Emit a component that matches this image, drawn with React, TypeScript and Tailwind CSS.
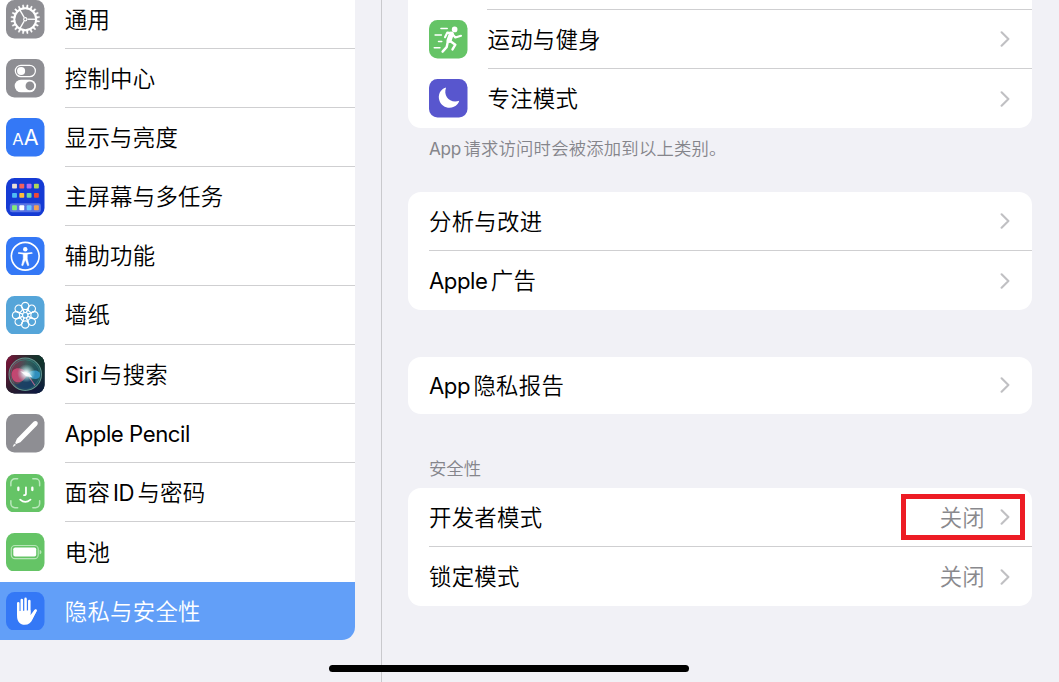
import type { ReactNode } from "react";

const range = (n: number) => Array.from({ length: n }, (_, i) => i);

function Gear() {
  return (
    <g stroke="#fff" fill="none">
      <circle cx="19" cy="19" r="10.8" strokeWidth="1.9" />
      {range(20).map((i) => (
        <path key={i} d="M18 8.6 18.4 4.7h1.2l.4 3.9z" fill="#fff" strokeWidth=".3" transform={`rotate(${i * 18 + 9} 19 19)`} />
      ))}
      {[90, 210, 330].map((a) => (
        <path key={a} d="M19 16.8V8.6" strokeWidth="1.3" transform={`rotate(${a} 19 19)`} />
      ))}
      <circle cx="19" cy="19" r="1.6" strokeWidth="1.1" />
    </g>
  );
}

function Switches() {
  return (
    <g>
      <rect x="9.2" y="6.2" width="19.8" height="11.2" rx="5.6" fill="none" stroke="#fff" strokeWidth="1.2" />
      <circle cx="14.9" cy="11.8" r="4" fill="#fff" />
      <rect x="8.6" y="20.4" width="21" height="12.4" rx="6.2" fill="#fff" />
      <circle cx="23.6" cy="26.6" r="4.3" fill="#8e8e93" />
    </g>
  );
}

function LetterSize() {
  return (
    <g fill="#fff" fontFamily="Inter, sans-serif">
      <text x="6.2" y="26.8" fontSize="16.3">A</text>
      <text x="17.6" y="26.8" fontSize="21.3">A</text>
    </g>
  );
}

const tiles = ["#e8dfd5", "#f4605c", "#b06cf0", "#b0d858", "#4fbcf5", "#fcbd3c", "#6bd7a2", "#ed4938", "#84ed78", "#fff", "#68c8fa", "#f2a053"];

function HomeGrid() {
  return (
    <g>
      <rect x="3.7" y="24.9" width="30.8" height="9" rx="2.4" fill="#5874e4" />
      {tiles.map((c, i) => (
        <rect key={i} x={6 + (i % 4) * 7.2} y={[5.6, 14.8, 27][Math.floor(i / 4)]} width="4.8" height="4.8" rx=".8" fill={c} />
      ))}
    </g>
  );
}

function Person() {
  return (
    <g>
      <circle cx="19" cy="19" r="13.7" fill="none" stroke="#fff" strokeWidth="1.6" />
      <circle cx="19" cy="12" r="2.2" fill="#fff" />
      <path d="M12.6 15.8 17.6 16.4h2.8l5-.6" stroke="#fff" strokeWidth="1.6" strokeLinecap="round" fill="none" />
      <path d="M17 16.2h4v5.3l1.6 6.4-1.2.5L19 22.5l-2.4 5.9-1.2-.5L17 21.5z" fill="#fff" stroke="#fff" strokeWidth=".5" strokeLinejoin="round" />
    </g>
  );
}

function Flower() {
  return (
    <g fill="none" stroke="#fff" strokeWidth="1.2">
      {range(8).map((i) => (
        <g key={i} transform={`rotate(${i * 45} 19 19)`}>
          <circle cx="19" cy="9.9" r="3.6" />
          <path d="M15.6 11.2 18 16.2M22.4 11.2 20 16.2" strokeWidth="1" />
        </g>
      ))}
      <circle cx="19" cy="19" r="2.7" />
    </g>
  );
}

function SiriOrb() {
  return (
    <g>
      <defs>
        <linearGradient id="siriBg" x1="0" y1="0" x2="1" y2="1">
          <stop offset="0" stopColor="#86143a" />
          <stop offset=".5" stopColor="#2b1c2d" />
          <stop offset="1" stopColor="#061745" />
        </linearGradient>
        <linearGradient id="siriGreen" x1="1" y1="0" x2=".4" y2=".5">
          <stop offset="0" stopColor="#0b3a2c" />
          <stop offset="1" stopColor="#0b3a2c" stopOpacity="0" />
        </linearGradient>
        <linearGradient id="siriBall" x1="0" y1=".4" x2="1" y2=".6">
          <stop offset="0" stopColor="#a32f52" />
          <stop offset=".5" stopColor="#3f7f78" />
          <stop offset="1" stopColor="#16617a" />
        </linearGradient>
        <radialGradient id="siriGlow">
          <stop offset="0" stopColor="#fff" />
          <stop offset=".25" stopColor="#eafcff" stopOpacity=".85" />
          <stop offset="1" stopColor="#a6eee9" stopOpacity="0" />
        </radialGradient>
      </defs>
      <rect width="38" height="38" rx="8.4" fill="url(#siriBg)" />
      <rect width="38" height="38" rx="8.4" fill="url(#siriGreen)" />
      <circle cx="19" cy="19" r="16" fill="url(#siriBall)" fillOpacity=".6" stroke="#63968f" strokeWidth="1" />
      <circle cx="19" cy="19" r="14.4" fill="none" stroke="#398d83" strokeWidth=".6" />
      <path d="M20 21Q12 33 7 27Q12 35 20 34Q27 33 29 28z" fill="#153b67" fillOpacity=".75" />
      <path d="M21 19C17 11 5.5 11 5.5 19.5S16 31 21 19z" fill="#e04c7e" fillOpacity=".75" />
      <path d="M20 19C24 24 33 26 33.5 20S25 14 20 19z" fill="#37a4dc" fillOpacity=".75" />
      <path d="M23 22 28.5 30" stroke="#ed7a9b" strokeWidth="1" strokeOpacity=".7" />
      <circle cx="20" cy="18" r="9" fill="url(#siriGlow)" />
      <path d="M14 16 23 18 26 22 20 21z" fill="#fff" fillOpacity=".8" />
    </g>
  );
}

function PencilTip() {
  return (
    <g fill="#fff">
      <path d="M27.2 7.7c1.2-1.1 2.8-.9 3.6 0s.8 2.5-.3 3.6L14.2 27.9l-4.2 1.8-1-1 1.8-4.3z" />
      <path d="M8.4 29.5 7.1 32 9.4 30.6z" stroke="#fff" strokeWidth=".6" />
    </g>
  );
}

function FaceScan() {
  return (
    <g fill="none" strokeLinecap="round">
      <path d="M4.8 11.5V8.8a4 4 0 0 1 4-4h2.7M26.5 4.8h2.7a4 4 0 0 1 4 4v2.7M33.2 26.5v2.7a4 4 0 0 1-4 4h-2.7M11.5 33.2H8.8a4 4 0 0 1-4-4v-2.7" stroke="#b9e8bb" strokeWidth="1.5" />
      <path d="M12.2 13.6v2.2M26 13.6v2.2" stroke="#fff" strokeWidth="2.3" />
      <path d="M19.7 13.2v6.2q0 1.5-1.9 1.5M14 25.3q5 4.6 10.2 0" stroke="#fff" strokeWidth="1.7" />
    </g>
  );
}

function Battery() {
  return (
    <g>
      <rect x="5.2" y="12.3" width="26.6" height="13" rx="3.6" fill="none" stroke="#b6e6b7" strokeWidth="1.1" />
      <rect x="7.2" y="14.3" width="22.6" height="9" rx="1.8" fill="#fff" />
      <path d="M33.2 16.7c2.4.6 2.4 3.6 0 4.2z" fill="#b6e6b7" />
    </g>
  );
}

function Hand() {
  return (
    <g fill="none" stroke="#fff" strokeWidth="2.5" strokeLinecap="round">
      <path d="M12.1 11v11M15.6 7.8v12M19.3 6.8v12M23 8.8v12" />
      <path d="M10.9 19v4.6c0 5.4 3 8.8 7.6 8.8 3.8 0 6.3-2.1 7.8-5.7l3.9-8.2c.6-1.4-.9-2.2-2-.9l-4 5V18z" fill="#fff" stroke="none" />
      <path d="M29.3 18.4 25 26" strokeWidth="2.2" />
    </g>
  );
}

function Runner() {
  return (
    <g fill="none" stroke="#fff" strokeLinecap="round" strokeLinejoin="round">
      <circle cx="25.3" cy="9.3" r="2.8" fill="#fff" stroke="none" />
      <path d="M15.8 17 18 12.5 22.2 12.8 26 17.3 31.6 15.6" strokeWidth="2.1" />
      <path d="M22 14 19.8 20" strokeWidth="5" />
      <path d="M20.5 20.6 26 24.4 23.2 29" strokeWidth="2.4" />
      <path d="M18.6 21.3 17.4 26.8 13.4 31.2" strokeWidth="2.4" />
      <path d="M11.8 8.5h6.2M6 14.9h6.2M9.4 21.2h3.2M5.2 27.5h5.6" strokeWidth="1.5" />
    </g>
  );
}

function Moon() {
  return <path d="M16.9 8.4C10.8 10 8.7 16 10.2 20.9c2.2 7.6 12.4 10.3 18 3.8.8-1 1.4-2 1.6-3.2-8.8 3.2-16.3-4.7-12.9-13.1z" fill="#fff" />;
}

function IconTile({ color, children }: { color: string; children: ReactNode }) {
  return (
    <svg viewBox="0 0 38 38" className="size-[38.5px] shrink-0" aria-hidden="true">
      <rect width="38" height="38" rx="8.4" fill={color} />
      {children}
    </svg>
  );
}

/* Latin runs are set tighter than the Chinese ones, with a thin gap between the scripts. */
function Label({ text }: { text: string }) {
  const runs = text.match(/[\x20-\x7e]+|[^\x20-\x7e]+/g) ?? [];
  return (
    <>
      {runs.map((run, i) => (
        <span key={i} className={/[A-Za-z]/.test(run) ? "mr-[0.15em] text-[0.99em] font-[370] tracking-[-0.02em] nth-[n+2]:ml-[0.13em]" : "font-[350] tracking-[0.012em]"}>
          {run}
        </span>
      ))}
    </>
  );
}

function Chevron() {
  return (
    <svg viewBox="0 0 10 16" className="h-4 w-2.5 shrink-0" aria-hidden="true">
      <path d="M1.6 1.3 8.4 8 1.6 14.7" fill="none" stroke="#c0c0c3" strokeWidth="2.1" strokeLinecap="round" strokeLinejoin="round" />
    </svg>
  );
}

const menu = [
  { label: "通用", color: "#8e8e93", icon: <Gear /> },
  { label: "控制中心", color: "#8e8e93", icon: <Switches /> },
  { label: "显示与亮度", color: "#3478f6", icon: <LetterSize /> },
  { label: "主屏幕与多任务", color: "#153bd4", icon: <HomeGrid /> },
  { label: "辅助功能", color: "#3478f6", icon: <Person /> },
  { label: "墙纸", color: "#55a5d9", icon: <Flower /> },
  { label: "Siri与搜索", color: "#17212f", icon: <SiriOrb /> },
  { label: "Apple Pencil", color: "#8e8e93", icon: <PencilTip /> },
  { label: "面容ID与密码", color: "#65c466", icon: <FaceScan /> },
  { label: "电池", color: "#65c466", icon: <Battery /> },
  { label: "隐私与安全性", color: "#3478f6", icon: <Hand />, active: true },
];

function Sidebar() {
  return (
    <aside className="h-full w-[382px] shrink-0 border-r border-[#c9c9cd]">
      <ul className="-mt-[10.3px] w-[354.5px] overflow-hidden rounded-br-[13px] bg-white">
        {menu.map((m, i) => (
          <li key={m.label} className={`flex items-center pl-[6.3px] ${m.active ? "h-[58.6px] bg-[#629ff8] text-white" : "h-[59.2px]"}`}>
            <IconTile color={m.color}>{m.icon}</IconTile>
            <span className={`ml-5 flex h-full flex-1 items-center whitespace-pre ${i < menu.length - 2 ? "border-b border-[#cfcfd1]" : ""}`}>
              <span className="pt-[1.5px]"><Label text={m.label} /></span>
            </span>
          </li>
        ))}
      </ul>
    </aside>
  );
}

function Row({ label, icon, value, last, marked, single }: { label: string; icon?: ReactNode; value?: string; last?: boolean; marked?: boolean; single?: boolean }) {
  return (
    <div className={`flex items-center pl-[21px] ${single ? "h-[57.5px]" : "h-[59px]"}`}>
      {icon}
      <div className={`flex h-full flex-1 items-center whitespace-pre pr-[22px] ${icon ? "ml-5" : ""} ${last ? "" : "border-b border-[#cfcfd1]"}`}>
        <span className="flex-1 pt-[1.5px]"><Label text={label} /></span>
        <span className={`relative flex items-center gap-[15px] text-[#89898d] ${marked ? "before:absolute before:-top-[6px] before:-right-[15px] before:h-[46px] before:w-[124px] before:border-5 before:border-[#ed1c24]" : ""}`}>
          {value && <span className="pt-[1.5px] leading-[32.5px]"><Label text={value} /></span>}
          <Chevron />
        </span>
      </div>
    </div>
  );
}

const card = "overflow-hidden rounded-[13px] bg-white";

export default function App() {
  return (
    <div className="relative flex h-[682px] w-[1059px] overflow-hidden bg-[#f1f1f6] font-['Inter','Noto_Sans_CJK_SC',sans-serif] text-[22.4px] leading-[34px] text-black">
      <Sidebar />
      <main className="ml-[26px] flex w-[624px] flex-col">
        <section className="rounded-b-[13px] bg-white">
          <div className="ml-[79px] h-2.5 border-b border-[#cfcfd1]" />
          <Row label="运动与健身" icon={<IconTile color="#65c466"><Runner /></IconTile>} />
          <Row label="专注模式" last icon={<IconTile color="#5856ce"><Moon /></IconTile>} />
        </section>
        <p className="mt-[9px] ml-[21px] h-6 text-[17.35px] leading-6 text-[#85858b]"><Label text="App请求访问时会被添加到以上类别。" /></p>
        <section className={`mt-[31px] ${card}`}>
          <Row label="分析与改进" />
          <Row label="Apple广告" last />
        </section>
        <section className={`mt-[46.5px] ${card}`}>
          <Row label="App隐私报告" last single />
        </section>
        <h2 className="mt-[43px] mb-[7px] ml-[21px] h-6 text-[17.35px] leading-6 font-[350] text-[#85858b]">安全性</h2>
        <section className={card}>
          <Row label="开发者模式" value="关闭" marked />
          <Row label="锁定模式" value="关闭" last />
        </section>
      </main>
      <div className="absolute top-[665px] left-[329px] h-[7px] w-[360px] rounded-full bg-black" />
    </div>
  );
}
